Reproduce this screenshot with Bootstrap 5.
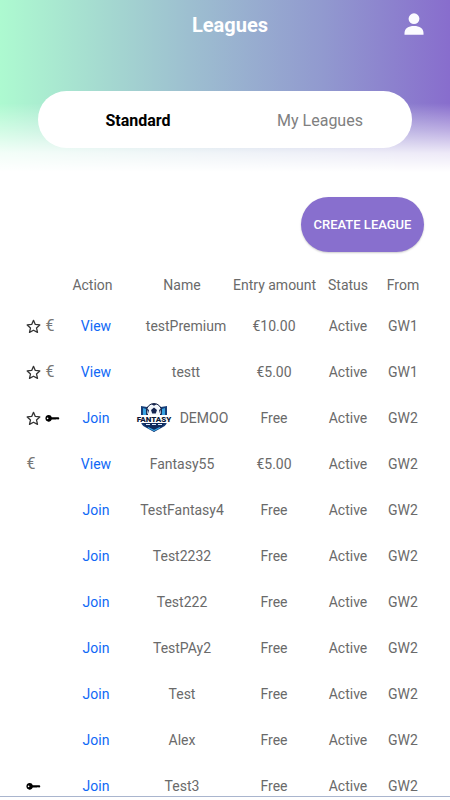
<!DOCTYPE html>
<html lang="en">
<head>
<meta charset="utf-8">
<meta name="viewport" content="width=device-width, initial-scale=1">
<title>Leagues</title>
<link href="https://cdn.jsdelivr.net/npm/bootstrap@5.3.0/dist/css/bootstrap.min.css" rel="stylesheet">
<style>
body { font-family: Roboto, "Liberation Sans", sans-serif; color: #6a6a6a; background: #fff; }
.hero { height: 172px; padding-top: 9px; background: linear-gradient(to bottom, rgba(255,255,255,0) 60%, rgba(255,255,255,.45) 76%, rgba(255,255,255,.85) 89%, #fff 100%), linear-gradient(to right, #adfad0 0%, #a9e9d0 12%, #9dbfd0 42%, #9199cf 72%, #886dcd 100%); }
.hero-bar { display: grid; grid-template-columns: 60px 1fr 60px; padding: 0 6px 0 16px; height: 32px; }
.hero-title { grid-column: 2; font-size: 20px; line-height: 32px; font-weight: 700; color: #fff; }
.league-tabs { margin: 50px 38px 0; height: 57px; padding: 2px 0 0 6px; border-radius: 29px; }
.league-tabs .btn { font-size: 16px; color: #808080; border: 0; }
.league-tabs .btn.active { padding-left: 4px !important; font-weight: 700; color: #000; }
.btn-create { width: 123px; height: 55px; font-size: 13px; font-weight: 500; color: #fff; background: #886fce; border: 0; box-shadow: 0 1px 2px rgba(0,0,0,.2); }
.btn-create:hover { background: #795fc3; color: #fff; }
.actions { padding: 25px 26px 15px; }
.league-list { padding: 0 24px 0 20px; }
.league-table { table-layout: fixed; font-size: 14px; line-height: 20px; }
.league-table th { height: 36px; font-weight: 400; }
.league-table td { height: 46px; }
.league-table a { color: #0f68f6; }
.col-flags { width: 40px; } .col-action { width: 72px; } .col-entry { width: 84px; } .col-status { width: 64px; } .col-from { width: 46px; }
.flags { padding-left: 5px; gap: 4px; height: 20px; }
.flags svg { width: 15px; height: 15px; flex: none; }
.euro { width: 10px; font-size: 16px; text-align: center; color: #777; }
.crest { width: 36px; height: 30px; }
.base { height: 4px; border-top: 1px solid #a9b5ce; }
</style>
</head>
<body class="vh-100 d-flex flex-column overflow-hidden">
<svg class="d-none" aria-hidden="true">
  <symbol id="star" viewBox="0 0 15 15"><path d="M7.5 1.3 9.3 5.4 13.8 5.9 10.5 8.9 11.5 13.4 7.5 11.2 3.5 13.4 4.5 8.9 1.2 5.9 5.7 5.4Z" fill="none" stroke="#333" stroke-width="1.3" stroke-linejoin="round"/></symbol>
  <symbol id="key" viewBox="0 0 15 15"><path fill="#000" fill-rule="evenodd" d="M3.9 4.1A3.3 3.3 0 0 1 6.8 6.2H13.6L14.4 7.2 13.6 8.5H12.6L12 8.1 11.2 8.6H6.8A3.3 3.3 0 1 1 3.9 4.1ZM2.6 6.6A.8.8 0 1 0 2.6 8.2 .8.8 0 1 0 2.6 6.6Z"/></symbol>
</svg>
<header class="hero flex-shrink-0">
  <div class="hero-bar align-items-center">
    <h1 class="hero-title text-center mb-0">Leagues</h1>
    <button class="btn border-0 p-0 d-flex justify-content-center" type="button" aria-label="Profile">
      <svg width="20" height="24" viewBox="0 0 20 24" fill="#fbfbff"><circle cx="10" cy="5.7" r="5.4"/><path d="M.5 21.8V20C.5 15.6 4.5 13 10 13S19.5 15.6 19.5 20V21.8Z"/></svg>
    </button>
  </div>
  <nav class="league-tabs bg-white d-flex" aria-label="League type">
    <button class="btn active flex-fill w-50 p-0" type="button">Standard</button>
    <button class="btn flex-fill w-50 p-0" type="button">My Leagues</button>
  </nav>
</header>
<div class="actions d-flex justify-content-end flex-shrink-0">
  <button class="btn btn-create rounded-pill p-0 text-nowrap" type="button">CREATE LEAGUE</button>
</div>
<main class="league-list flex-fill overflow-hidden">
  <table class="league-table w-100 text-center align-middle text-nowrap">
    <colgroup><col class="col-flags"><col class="col-action"><col><col class="col-entry"><col class="col-status"><col class="col-from"></colgroup>
    <thead><tr><th></th><th class="pe-2">Action</th><th>Name</th><th>Entry amount</th><th>Status</th><th>From</th></tr></thead>
    <tbody>
      <tr><td><div class="flags d-flex align-items-center"><svg><use href="#star"/></svg><span class="euro">€</span></div></td><td><a class="text-decoration-none" href="#">View</a></td><td><span class="ps-2">testPremium</span></td><td>€10.00</td><td>Active</td><td>GW1</td></tr>
      <tr><td><div class="flags d-flex align-items-center"><svg><use href="#star"/></svg><span class="euro">€</span></div></td><td><a class="text-decoration-none" href="#">View</a></td><td><span class="ps-2">testt</span></td><td>€5.00</td><td>Active</td><td>GW1</td></tr>
      <tr><td><div class="flags d-flex align-items-center"><svg><use href="#star"/></svg><svg><use href="#key"/></svg></div></td><td><a class="text-decoration-none" href="#">Join</a></td>
        <td><div class="d-flex align-items-center justify-content-center gap-2">
          <svg class="crest" viewBox="0 0 36 30" role="img" aria-label="Fantasy crest">
            <path d="M5 3 11 4 18 1 25 4 31 3V18Q31 22 27 24L18 29 9 24Q5 22 5 18Z" fill="#173e78"/>
            <path d="M7 5 10 6V18H7ZM29 5 26 6V18H29Z" fill="#3aa5e4"/>
            <circle cx="18" cy="8" r="7.5" fill="#f3f7fc" stroke="#101e42"/>
            <path d="M18 4.5 21 7 19.8 10.5H16.2L15 7ZM15 1H21L18 2.7ZM10.8 5.5 13 7 12.2 10.3ZM25.2 5.5 23 7 23.8 10.3Z" fill="#142450"/>
            <path d="M0 12H36L34 20H2Z" fill="#fff"/>
            <text x="18" y="18.8" text-anchor="middle" font-family="Roboto, sans-serif" font-size="8" font-weight="900" fill="#0b1838">FANTASY</text>
            <path d="M7 20H29L26 23.8 18 28.5 10 23.8Z" fill="#102a5c"/>
            <path d="M10 21.5H14M16 21.5H20M22 21.5H26" stroke="#dcecff"/>
            <path d="M12 24.5 18 27.5 24 24.5" fill="none" stroke="#3aa5e4" stroke-width="1.3"/>
          </svg><span>DEMOO</span></div></td><td>Free</td><td>Active</td><td>GW2</td></tr>
      <tr><td><div class="flags d-flex align-items-center"><span class="euro">€</span></div></td><td><a class="text-decoration-none" href="#">View</a></td><td>Fantasy55</td><td>€5.00</td><td>Active</td><td>GW2</td></tr>
      <tr><td></td><td><a class="text-decoration-none" href="#">Join</a></td><td>TestFantasy4</td><td>Free</td><td>Active</td><td>GW2</td></tr>
      <tr><td></td><td><a class="text-decoration-none" href="#">Join</a></td><td>Test2232</td><td>Free</td><td>Active</td><td>GW2</td></tr>
      <tr><td></td><td><a class="text-decoration-none" href="#">Join</a></td><td>Test222</td><td>Free</td><td>Active</td><td>GW2</td></tr>
      <tr><td></td><td><a class="text-decoration-none" href="#">Join</a></td><td>TestPAy2</td><td>Free</td><td>Active</td><td>GW2</td></tr>
      <tr><td></td><td><a class="text-decoration-none" href="#">Join</a></td><td>Test</td><td>Free</td><td>Active</td><td>GW2</td></tr>
      <tr><td></td><td><a class="text-decoration-none" href="#">Join</a></td><td>Alex</td><td>Free</td><td>Active</td><td>GW2</td></tr>
      <tr><td><div class="flags d-flex align-items-center"><svg><use href="#key"/></svg></div></td><td><a class="text-decoration-none" href="#">Join</a></td><td>Test3</td><td>Free</td><td>Active</td><td>GW2</td></tr>
    </tbody>
  </table>
</main>
<div class="base flex-shrink-0"></div>
<script src="https://cdn.jsdelivr.net/npm/bootstrap@5.3.0/dist/js/bootstrap.bundle.min.js"></script>
</body>
</html>
